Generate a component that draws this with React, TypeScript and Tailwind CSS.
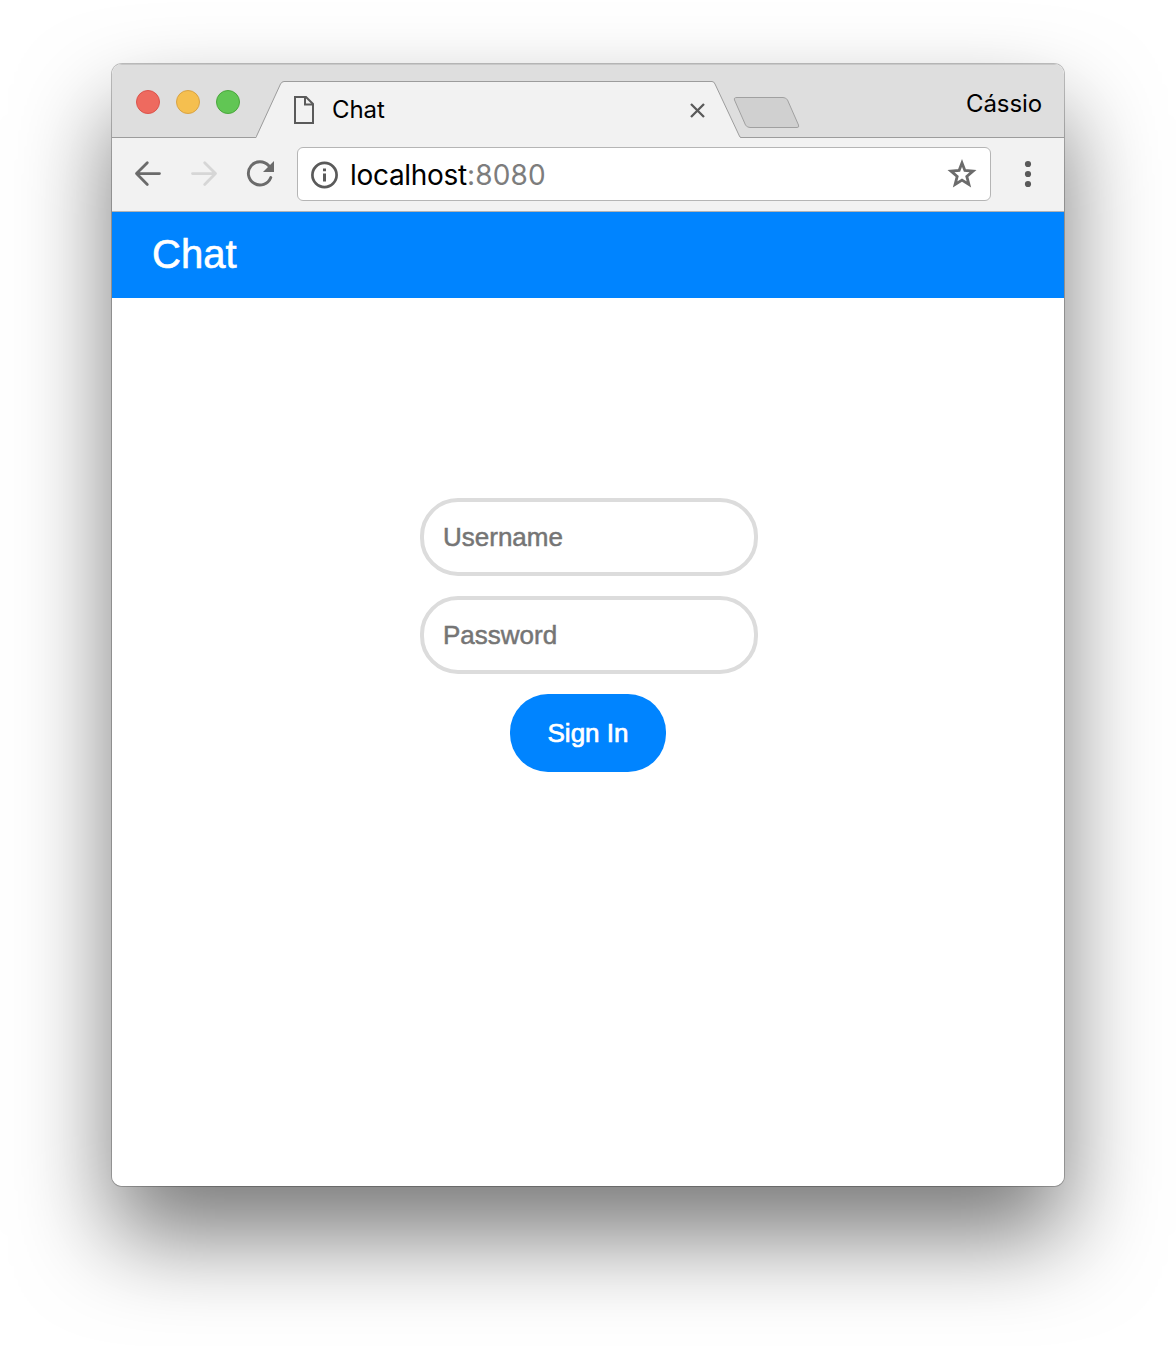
function TabStrip() {
  return (
    <div className="relative flex h-[74px] items-start bg-[#dedede] shadow-[inset_0_1px_0_#c8c8c8,inset_0_-1px_0_#9c9c9c]">
      <div className="flex gap-4 pt-[26px] pl-6">
        <span className="size-6 rounded-full border border-[#dc544c] bg-[#ee6a5f]" />
        <span className="size-6 rounded-full border border-[#d9a344] bg-[#f5bf4f]" />
        <span className="size-6 rounded-full border border-[#4aa73c] bg-[#61c654]" />
      </div>
      <div className="relative ml-4 flex h-[74px] w-[485px] items-center pt-[18px] pr-[36px] pl-[37px]">
        <svg className="absolute inset-0" width="485" height="74" viewBox="0 0 485 74" fill="none">
          <path d="M0 74L0.500 73L24.500 20Q25.800 17.500 28 17.500H456Q458 17.500 459 20L484 73L485 74Z" fill="#f2f2f2" />
          <path d="M-1 73.500Q0 73.500 0.600 72L24.500 20Q25.800 17.500 28 17.500H456Q458 17.500 459 20L483.400 72Q484 73.500 485 73.500" stroke="#9c9c9c" />
        </svg>
        <svg className="relative" width="22" height="28" viewBox="0 0 22 28" fill="none" stroke="#5a5a5a" strokeWidth="2">
          <path d="M2 1H13L20 8V27H2Z" />
          <path d="M12 1V8.500H20" />
        </svg>
        <span className="relative ml-[17px] font-['Inter'] text-[24px] leading-7 tracking-[-0.1px] text-black">Chat</span>
        <svg className="relative ml-auto" width="15" height="15" viewBox="0 0 15 15" stroke="#5a5a5a" strokeWidth="2.300">
          <path d="M1 1L14 14M14 1L1 14" />
        </svg>
      </div>
      <svg className="mt-[32px] ml-[-8px] shrink-0" width="68" height="34" viewBox="0 0 68 34" fill="none">
        <path d="M4 1.500H50Q53 1.500 54.500 4L65.500 29Q66.500 31.500 64 31.500H17Q14 31.500 12.500 29L1.500 4Q.5 1.500 4 1.500Z" fill="#d0d0d0" stroke="#a0a0a0" />
      </svg>
      <span className="mt-[26px] mr-[22px] ml-auto font-['Inter'] text-[24px] leading-7 tracking-[-0.1px] text-black">Cássio</span>
    </div>
  );
}

function Toolbar() {
  return (
    <div className="flex h-[74px] items-start border-b border-[#b3b3b3] bg-[#f2f2f2] pt-[9px]">
      <svg className="mt-[13px] ml-[22px]" width="28" height="28" viewBox="0 0 28 28" fill="none" stroke="#6b6b6b" strokeWidth="2.800" strokeLinecap="round" strokeLinejoin="round">
        <path d="M25.500 13.600H3M13.300 2.800L2.500 13.600L13.300 24.400" />
      </svg>
      <svg className="mt-[13px] ml-[28px]" width="28" height="28" viewBox="0 0 28 28" fill="none" stroke="#d6d6d6" strokeWidth="2.800" strokeLinecap="round" strokeLinejoin="round">
        <path d="M2.500 13.600H25M14.700 2.800L25.500 13.600L14.700 24.400" />
      </svg>
      <svg className="mt-[13px] ml-[28px]" width="30" height="28" viewBox="0 0 30 28" fill="none">
        <path d="M22.800 5.800A11.600 11.600 0 1 0 24.800 17.500" stroke="#6b6b6b" strokeWidth="2.900" strokeLinecap="round" />
        <path d="M28 1V12H17Z" fill="#6b6b6b" />
      </svg>
      <div className="ml-[21px] flex h-[54px] w-[694px] items-center rounded-[6px] border border-[#b5b5b5] bg-white px-3">
        <svg className="mt-px" width="28" height="28" viewBox="0 0 28 28" fill="none">
          <circle cx="14.500" cy="14" r="12.100" stroke="#5a5a5a" strokeWidth="2.700" />
          <path d="M14.500 7.500V10.200M14.500 12.500V20.500" stroke="#5a5a5a" strokeWidth="3" />
        </svg>
        <span className="mt-[2px] ml-[12px] font-['Inter'] text-[28px] leading-8 tracking-[-0.3px] text-black">
          localhost<span className="tracking-[0.2px] text-[#7d7d7d]">:8080</span>
        </span>
        <svg className="ml-auto" width="32" height="32" viewBox="0 0 32 32" fill="none" stroke="#6b6b6b" strokeWidth="2.800">
          <path d="M16 5L18.900 12.500L27 13.100L20.800 18.400L22.900 26.500L16 22.100L9.100 26.500L11.200 18.400L5 13.100L13.100 12.500Z" />
        </svg>
      </div>
      <svg className="mt-[13px] ml-[33px]" width="8" height="28" viewBox="0 0 8 28" fill="#5a5a5a">
        <circle cx="4" cy="4" r="3.100" />
        <circle cx="4" cy="14" r="3.100" />
        <circle cx="4" cy="24" r="3.100" />
      </svg>
    </div>
  );
}

function SignInPage() {
  return (
    <>
      <header className="flex h-[86px] items-center bg-[#0084ff] pb-0.5 pl-10 text-[40px] text-white [-webkit-text-stroke:0.6px_white]">Chat</header>
      <form className="flex flex-col items-center gap-5 pt-[200px] pl-0.5 text-[26px]">
        <input
          className="h-[78px] w-[338px] rounded-[38px] border-4 border-[#dcdcdc] bg-white px-[19px] placeholder:text-[#757575] placeholder:opacity-100 placeholder:[-webkit-text-stroke:0.5px_#757575]"
          placeholder="Username"
        />
        <input
          type="password"
          className="h-[78px] w-[338px] rounded-[38px] border-4 border-[#dcdcdc] bg-white px-[19px] placeholder:text-[#757575] placeholder:opacity-100 placeholder:[-webkit-text-stroke:0.5px_#757575]"
          placeholder="Password"
        />
        <button type="button" className="mr-0.5 h-[78px] w-[156px] rounded-[38px] bg-[#0084ff] text-white [-webkit-text-stroke:0.7px_white]">
          Sign In
        </button>
      </form>
    </>
  );
}

export default function App() {
  return (
    <div className="h-[1346px] w-[1176px] overflow-hidden bg-white px-28 pt-16 font-['Liberation_Sans',sans-serif]">
      <div className="h-[1122px] w-[952px] rounded-[10px] shadow-[0_0_0_1px_rgba(0,0,0,0.24),0_50px_94px_rgba(0,0,0,0.53)]">
        <div className="h-full overflow-hidden rounded-[10px] bg-white">
          <TabStrip />
          <Toolbar />
          <SignInPage />
        </div>
      </div>
    </div>
  );
}
